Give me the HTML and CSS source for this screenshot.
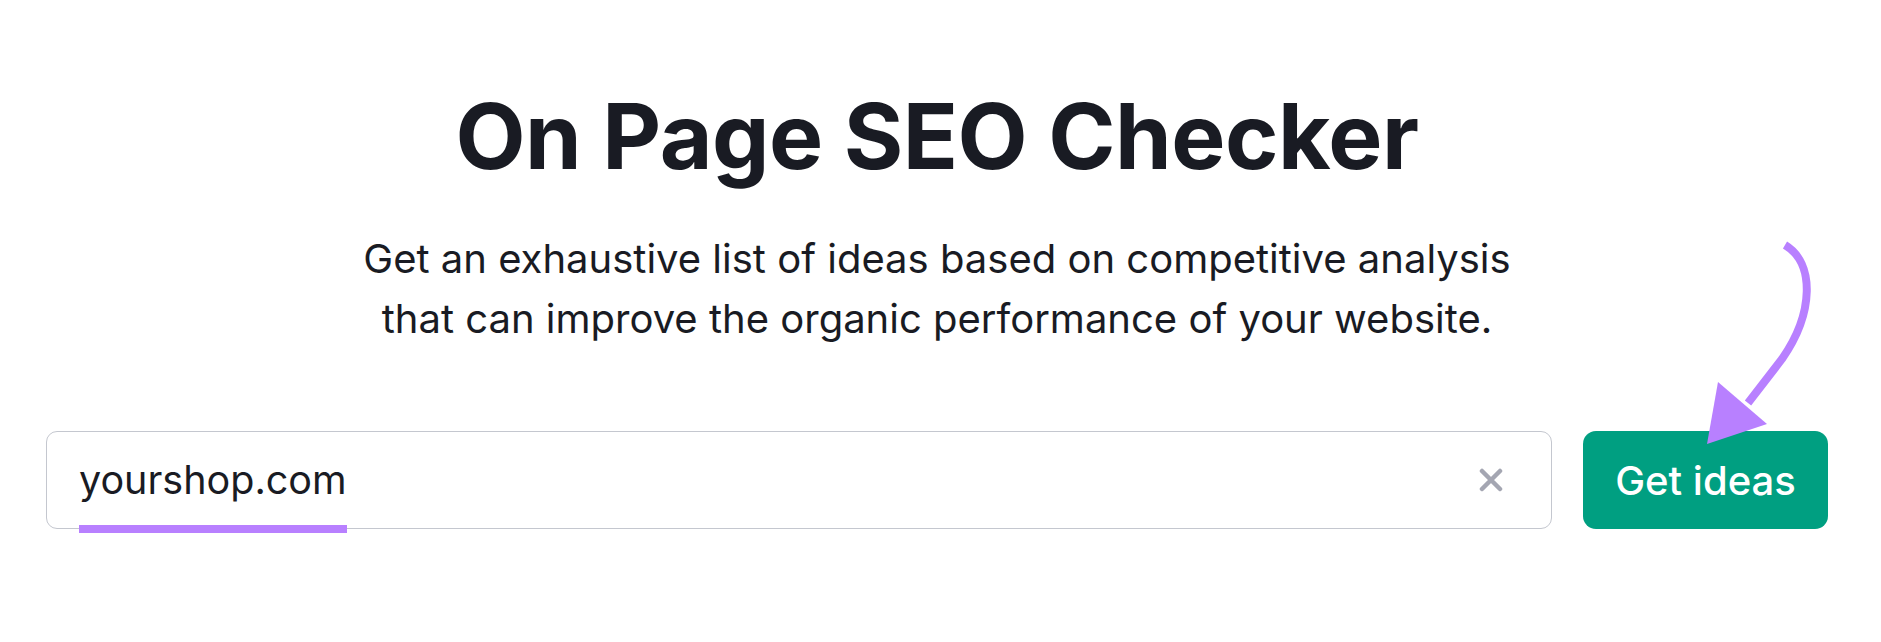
FILE: index.html
```html
<!DOCTYPE html>
<html lang="en">
<head>
<meta charset="utf-8">
<title>On Page SEO Checker</title>
<link rel="stylesheet" href="styles.css">
</head>
<body>
<main class="page">
  <h1 class="title">On Page SEO Checker</h1>
  <p class="subtitle">Get an exhaustive list of ideas based on competitive analysis<br>that can improve the organic performance of your website.</p>
  <form class="search">
    <div class="field">
      <span class="value">yourshop.com</span>
      <span class="clear" aria-label="Clear">
        <svg viewBox="0 0 24 24" width="24" height="24"><path d="M3 3 L21 21 M21 3 L3 21" stroke="#a4a6b2" stroke-width="4.5" stroke-linecap="round" fill="none"/></svg>
      </span>
    </div>
    <button type="button" class="btn">Get ideas</button>
  </form>
  <svg class="arrow" viewBox="0 0 130 220" width="130" height="220">
    <path d="M95 10 C 125 28, 124 78, 92 124 L 58 168" stroke="#b880ff" stroke-width="8" fill="none"/>
    <polygon points="28,147 77,189 17,209" fill="#b880ff"/>
  </svg>
</main>
</body>
</html>
```
FILE: styles.css
```css
html, body {
  margin: 0;
  padding: 0;
  background: #ffffff;
}
body {
  font-family: Inter, "Noto Sans", sans-serif;
  color: #191b23;
}
.page {
  position: relative;
  width: 1881px;
  height: 642px;
  box-sizing: border-box;
  padding: 91px 7px 0 0;
  display: flex;
  flex-direction: column;
  align-items: center;
}
.title {
  margin: 0;
  font-size: 91px;
  line-height: 91px;
  font-weight: 700;
  letter-spacing: -0.5px;
  color: #191b23;
}
.subtitle {
  margin: 47px 0 0;
  font-size: 40px;
  line-height: 60px;
  font-weight: 400;
  text-align: center;
  color: #191b23;
}
.search {
  margin-top: 82px;
  align-self: stretch;
  display: flex;
  gap: 31px;
  padding: 0 46px 0 46px;
}
.field {
  flex: 1;
  height: 98px;
  box-sizing: border-box;
  border: 1.5px solid #c4c7cf;
  border-radius: 11px;
  display: flex;
  align-items: center;
  justify-content: space-between;
  padding: 0 48px 0 32px;
}
.value {
  position: relative;
  font-size: 39.5px;
  line-height: 48px;
  color: #191b23;
}
.value::after {
  content: "";
  position: absolute;
  left: 0;
  right: 0;
  top: 69px;
  height: 8px;
  background: #b880ff;
}
.clear {
  display: flex;
  width: 24px;
  height: 24px;
}
.btn {
  width: 245px;
  height: 98px;
  border: 0;
  border-radius: 13px;
  background: #009f81;
  color: #ffffff;
  font-family: Inter, "Noto Sans", sans-serif;
  font-size: 40px;
  font-weight: 500;
  padding: 0;
  cursor: pointer;
}
.arrow {
  position: absolute;
  left: 1690px;
  top: 235px;
}
```
